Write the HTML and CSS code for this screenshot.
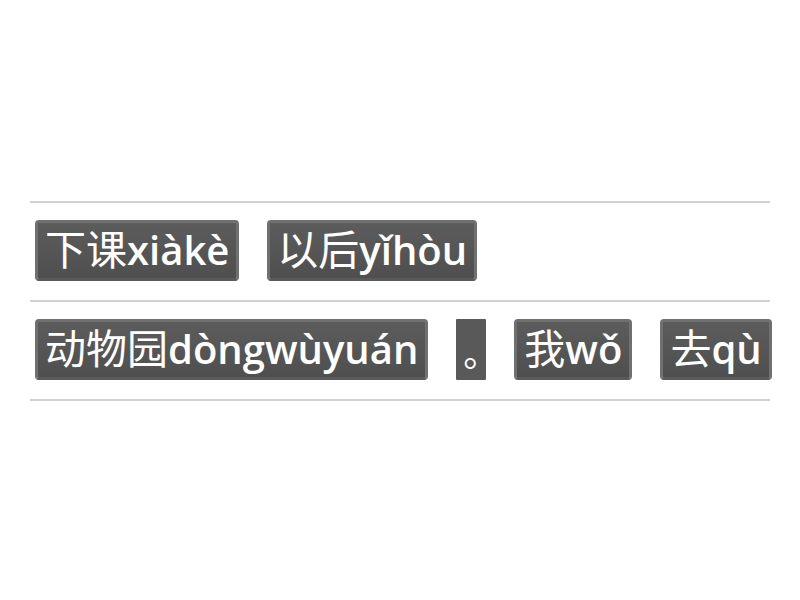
FILE: index.html
```html
<!DOCTYPE html>
<html lang="zh">
<head>
<meta charset="utf-8">
<link rel="stylesheet" href="styles.css">
</head>
<body>
<div class="page">
  <div class="sentence">
    <div class="row">
      <span class="word"><span class="hz">下课</span>xiàkè</span>
      <span class="word"><span class="hz">以后</span>yǐhòu</span>
    </div>
    <div class="row">
      <span class="word"><span class="hz">动物园</span>dòngwùyuán</span>
      <span class="punct">。</span>
      <span class="word"><span class="hz">我</span>wǒ</span>
      <span class="word"><span class="hz">去</span>qù</span>
    </div>
  </div>
</div>
</body>
</html>
```
FILE: styles.css
```css
html, body {
  margin: 0;
  padding: 0;
  background: #ffffff;
}
.page {
  width: 800px;
  height: 600px;
  padding-top: 201px;
  box-sizing: border-box;
}
.sentence {
  margin: 0 30px;
  border-top: 2px solid #d2d2d2;
}
.row {
  display: flex;
  align-items: flex-start;
  gap: 28px;
  padding: 17px 5px 19px;
  border-bottom: 2px solid #d2d2d2;
}
.word {
  display: block;
  height: 49px;
  line-height: 49px;
  padding: 0 7px 6px;
  border: 3px solid #707070;
  border-bottom-color: #5a5a5a;
  border-radius: 4px;
  background: linear-gradient(#5c5c5c, #4f4f4f);
  color: #ffffff;
  font-family: "Open Sans", "Noto Sans CJK SC", sans-serif;
  font-weight: 600;
  font-size: 40px;
  white-space: nowrap;
}
.hz {
  font-family: "Noto Sans CJK SC", sans-serif;
  font-weight: 400;
  font-size: 41px;
}
.punct {
  display: flex;
  align-items: flex-end;
  justify-content: flex-start;
  box-sizing: border-box;
  width: 30px;
  height: 61px;
  padding: 0 0 11px 7px;
  border-radius: 1px;
  background: #595959;
  color: #ffffff;
  font-family: "Noto Sans CJK SC", sans-serif;
  font-size: 36px;
  line-height: 1;
  white-space: nowrap;
  overflow: visible;
}
```
